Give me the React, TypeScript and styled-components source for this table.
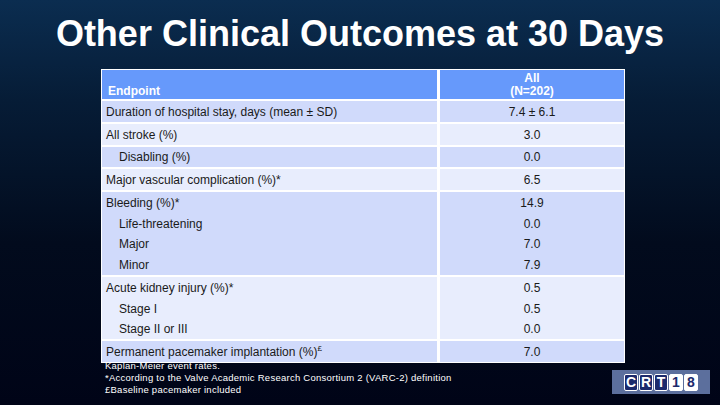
import React from "react";
import styled, { createGlobalStyle } from "styled-components";

const Global = createGlobalStyle`
  html, body { margin: 0; padding: 0; }
  body { width: 720px; height: 405px; overflow: hidden; background: #000; }
`;

const Slide = styled.div`
  width: 720px;
  height: 405px;
  display: flex;
  flex-direction: column;
  background: linear-gradient(180deg, #0b2d50 0%, #061c36 25%, #020b1d 60%, #000417 100%);
  font-family: "Liberation Sans", Arial, sans-serif;
  overflow: hidden;
`;

const Title = styled.h1`
  margin: 0;
  height: 69px;
  display: flex;
  align-items: center;
  justify-content: center;
  padding-bottom: 2px;
  box-sizing: border-box;
  color: #ffffff;
  font-size: 36px;
  font-weight: bold;
  letter-spacing: 0;
`;

const Table = styled.div`
  position: relative;
  z-index: 1;
  margin-left: 101px;
  width: 524px;
  box-sizing: border-box;
  background: #ffffff;
  padding: 1px;
  display: flex;
  flex-direction: column;
  gap: 2px;
`;

const HeaderRow = styled.div`
  display: grid;
  grid-template-columns: 335px 184px;
  column-gap: 3px;
  height: 29px;
`;

const HeaderCell = styled.div<{ $center?: boolean }>`
  background: #6699fb;
  color: #ffffff;
  font-weight: bold;
  font-size: 12px;
  line-height: 13px;
  display: flex;
  flex-direction: column;
  justify-content: flex-end;
  align-items: ${(p) => (p.$center ? "center" : "flex-start")};
  padding: 0 0 1px ${(p) => (p.$center ? "0" : "6px")};
  text-align: center;
`;

const Group = styled.div`
  display: flex;
  flex-direction: column;
`;

const Row = styled.div`
  display: grid;
  grid-template-columns: 335px 184px;
  column-gap: 3px;
  height: 20.75px;
`;

const Cell = styled.div<{ $shade: "dark" | "light"; $indent?: boolean; $center?: boolean }>`
  background: ${(p) => (p.$shade === "dark" ? "#d0dafb" : "#e8edfd")};
  color: #1a1a1a;
  font-size: 12px;
  display: flex;
  align-items: center;
  justify-content: ${(p) => (p.$center ? "center" : "flex-start")};
  padding-left: ${(p) => (p.$center ? "0" : p.$indent ? "17px" : "4px")};
  white-space: nowrap;
  padding-top: 1px;
  box-sizing: border-box;
`;

const Sup = styled.sup`
  font-size: 8px;
  line-height: 0;
  vertical-align: 5px;
`;

const Footer = styled.div`
  display: flex;
  justify-content: space-between;
  align-items: flex-start;
  margin-top: -3px;
  padding: 0 10px 0 105px;
`;

const Notes = styled.div`
  color: #ffffff;
  font-size: 9.5px;
  line-height: 12px;
  letter-spacing: 0.25px;
  white-space: nowrap;
`;

const Logo = styled.div`
  margin-top: 10px;
  width: 98px;
  height: 24px;
  background: #5c6f9d;
  display: flex;
  align-items: center;
  justify-content: center;
  gap: 1px;
`;

const LogoBox = styled.div<{ $light?: boolean }>`
  width: 14px;
  height: 17px;
  box-sizing: border-box;
  border-radius: 2px;
  border: 1px solid #ffffff;
  background: ${(p) => (p.$light ? "#ffffff" : "#1c2a6c")};
  color: ${(p) => (p.$light ? "#1c2a6c" : "#ffffff")};
  font-family: "Liberation Sans", Arial, sans-serif;
  font-weight: bold;
  font-size: 14px;
  line-height: 15px;
  text-align: center;
`;

type Item = { label: React.ReactNode; value: string; indent?: boolean };

const groups: { shade: "dark" | "light"; items: Item[] }[] = [
  { shade: "dark", items: [{ label: "Duration of hospital stay, days (mean ± SD)", value: "7.4 ± 6.1" }] },
  { shade: "light", items: [{ label: "All stroke (%)", value: "3.0" }] },
  { shade: "dark", items: [{ label: "Disabling (%)", value: "0.0", indent: true }] },
  { shade: "light", items: [{ label: "Major vascular complication (%)*", value: "6.5" }] },
  {
    shade: "dark",
    items: [
      { label: "Bleeding (%)*", value: "14.9" },
      { label: "Life-threatening", value: "0.0", indent: true },
      { label: "Major", value: "7.0", indent: true },
      { label: "Minor", value: "7.9", indent: true },
    ],
  },
  {
    shade: "light",
    items: [
      { label: "Acute kidney injury (%)*", value: "0.5" },
      { label: "Stage I", value: "0.5", indent: true },
      { label: "Stage II or III", value: "0.0", indent: true },
    ],
  },
  {
    shade: "dark",
    items: [
      {
        label: (
          <span>
            Permanent pacemaker implantation (%)<Sup>£</Sup>
          </span>
        ),
        value: "7.0",
      },
    ],
  },
];

export default function App() {
  return (
    <Slide>
      <Global />
      <Title>Other Clinical Outcomes at 30 Days</Title>
      <Table>
        <HeaderRow>
          <HeaderCell>Endpoint</HeaderCell>
          <HeaderCell $center>
            <span>All</span>
            <span>(N=202)</span>
          </HeaderCell>
        </HeaderRow>
        {groups.map((g, gi) => (
          <Group key={gi}>
            {g.items.map((it, ii) => (
              <Row key={ii}>
                <Cell $shade={g.shade} $indent={it.indent}>
                  {it.label}
                </Cell>
                <Cell $shade={g.shade} $center>
                  {it.value}
                </Cell>
              </Row>
            ))}
          </Group>
        ))}
      </Table>
      <Footer>
        <Notes>
          <div>Kaplan-Meier event rates.</div>
          <div>*According to the Valve Academic Research Consortium 2 (VARC-2) definition</div>
          <div>£Baseline pacemaker included</div>
        </Notes>
        <Logo>
          <LogoBox>C</LogoBox>
          <LogoBox>R</LogoBox>
          <LogoBox>T</LogoBox>
          <LogoBox $light>1</LogoBox>
          <LogoBox $light>8</LogoBox>
        </Logo>
      </Footer>
    </Slide>
  );
}
